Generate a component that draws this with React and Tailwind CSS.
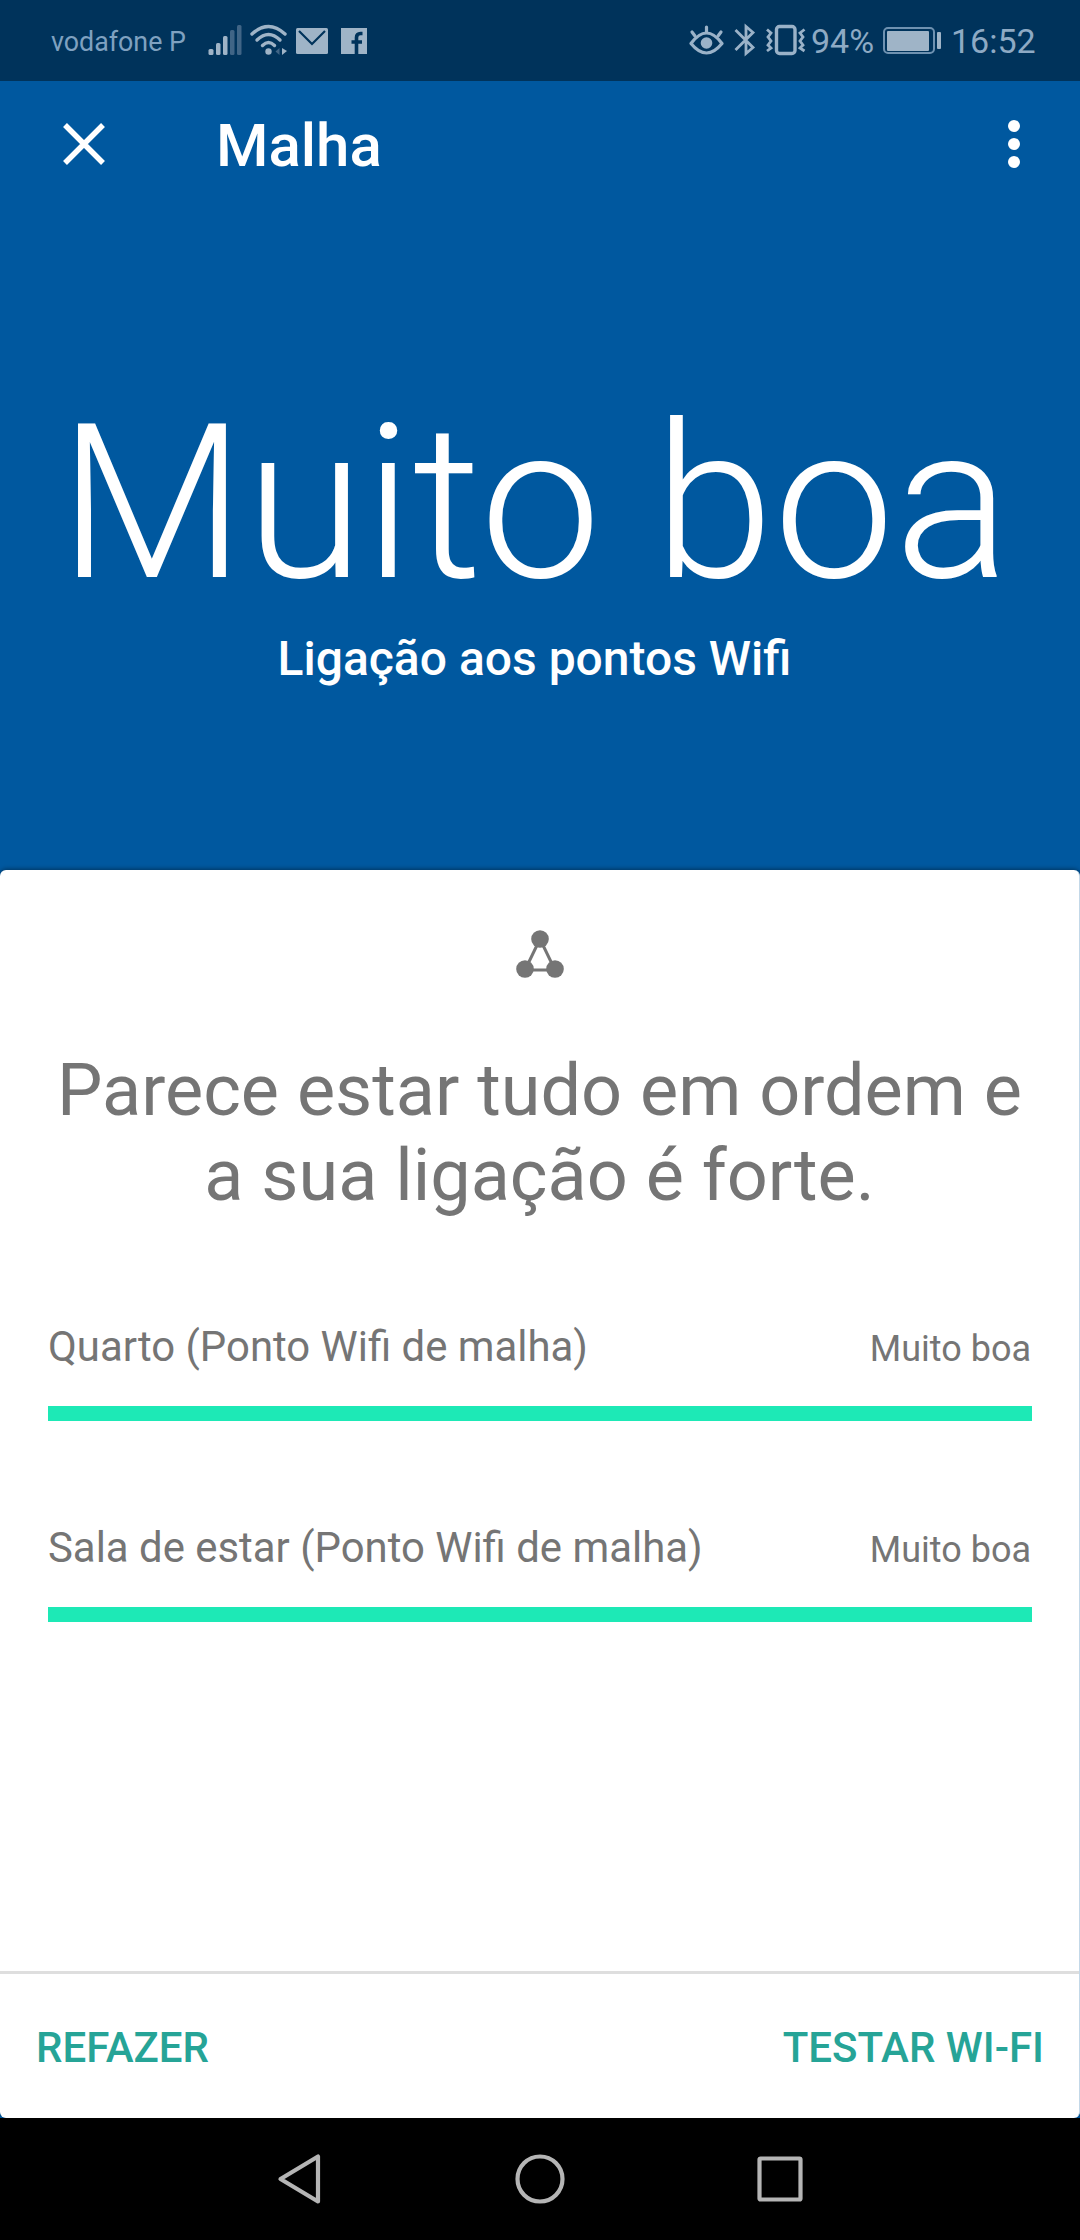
import React from 'react';

const rows = [
    { id: 1, name: 'Quarto (Ponto Wifi de malha)', status: 'Muito boa', strength: 100 },
    { id: 2, name: 'Sala de estar (Ponto Wifi de malha)', status: 'Muito boa', strength: 100 },
];

const StatusBar = () => (
    <div className="h-[81px] pb-[1px] bg-[#00335b] flex items-center pl-[51px] pr-[41px] text-[#8eaac4]">
        <span className="w-[157px] pt-[3px] text-[26.8px] leading-[32px] text-[#7fa1c0] whitespace-nowrap">vodafone P</span>
        {/* signal */}
        <svg className="w-[34px] h-[80px]" viewBox="208 0 34 80" fill="#9fb4c7">
            <rect x="208.5" y="49" width="5" height="6" rx="1.5" />
            <rect x="216" y="43" width="4.5" height="12" rx="1.5" />
            <rect x="223" y="36" width="4.5" height="19" rx="1.5" />
            <rect x="230" y="30" width="4.5" height="25" rx="1.5" fill="#406586" />
            <rect x="237" y="25" width="4.5" height="30" rx="1.5" fill="#406586" />
        </svg>
        {/* wifi */}
        <svg className="ml-[8px] w-[38px] h-[80px]" viewBox="250 0 38 80" fill="none" stroke="#9fb4c7" strokeWidth="3.4" strokeLinecap="round">
            <path d="M252 34Q268.500 19 285 34" />
            <path d="M257 40Q268.500 29 280 40" />
            <path d="M262.500 45.500Q268.500 39.500 274.500 45.500" />
            <circle cx="268.500" cy="51.500" r="3.200" fill="#9fb4c7" stroke="none" />
            <path d="M279.500 48v7l-4-3.500z" fill="#406586" stroke="none" />
            <path d="M282 48v7l5-4z" fill="#9fb4c7" stroke="none" />
        </svg>
        {/* mail */}
        <svg className="ml-[8px] w-[32px] h-[26px] mt-[2px]" viewBox="0 0 32 26" fill="none">
            <rect width="32" height="26" rx="1.500" fill="#9fb4c7" />
            <path d="M3 3L16 16L29 3" stroke="#00335b" strokeWidth="2.200" />
        </svg>
        {/* facebook */}
        <svg className="ml-[13px] w-[26px] h-[26px] mt-[2px]" viewBox="0 0 26 26" fill="none">
            <rect width="26" height="26" fill="#9fb4c7" />
            <path d="M15.500 26V9.500q0-4 4-4h2M10.500 14h10.500" stroke="#00335b" strokeWidth="3.600" />
        </svg>
        {/* eye */}
        <svg className="ml-auto w-[36px] h-[80px]" viewBox="688 0 36 80" fill="none" stroke="#9ab2c8" strokeWidth="3.200" strokeLinecap="round">
            <path d="M691 43.500Q706.500 22.500 722 43.500Q706.500 62.500 691 43.500z" strokeLinejoin="round" />
            <circle cx="706.500" cy="43" r="5.800" fill="#9ab2c8" stroke="none" />
            <path d="M706.500 27v5M692 32l3 4M721 32l-3 4" />
        </svg>
        {/* bluetooth */}
        <svg className="ml-[10px] w-[22px] h-[80px]" viewBox="734 0 22 80" fill="none" stroke="#9ab2c8" strokeWidth="2.800">
            <path d="M735.500 30L753 47.500L746 53.500V26.500L753 32.500L735.500 50" />
        </svg>
        {/* vibrate */}
        <svg className="ml-[8px] w-[44px] h-[80px]" viewBox="764 0 44 80" fill="none" stroke="#9ab2c8" strokeWidth="2.800">
            <rect x="776.500" y="26.500" width="18.500" height="27" rx="3" strokeWidth="3.400" />
            <path d="M767 29.500l4 3.500l-3 4l3 4l-3 4l3 3l-4 3M804.500 29.500l-4.500 3.500l3 4l-3 4l3 4l-3 3l4.500 3" />
        </svg>
        <span className="w-[74px] pl-[3px] pt-[2px] text-[34px] leading-[40px]">94%</span>
        {/* battery */}
        <svg className="w-[60px] h-[80px]" viewBox="882 0 60 80" fill="none">
            <rect x="884" y="28" width="50" height="25" rx="4" strokeWidth="2" stroke="#6f92b1" />
            <rect x="887" y="31" width="42" height="20" rx="1" fill="#9fb4c7" />
            <rect x="937" y="32" width="4" height="17" rx="1" fill="#9fb4c7" />
        </svg>
        <span className="w-[97px] pl-[9px] pt-[2px] text-[34px] leading-[40px] whitespace-nowrap">16:52</span>
    </div>
);

const AppBar = () => (
    <div className="h-[127px] pb-[1px] flex items-center pl-[63px] pr-[60px]">
        <svg className="w-[42px] h-[42px]" viewBox="0 0 42 42" stroke="#fff" strokeWidth="5.500">
            <path d="M2 2L40 40M40 2L2 40" />
        </svg>
        <h1 className="ml-[111px] pt-[4px] text-[60px] leading-[72px] font-medium">Malha</h1>
        <svg className="ml-auto w-[12px] h-[48px]" viewBox="0 0 12 48" fill="#fff">
            <circle cx="6" cy="6" r="6" />
            <circle cx="6" cy="24" r="6" />
            <circle cx="6" cy="42" r="6" />
        </svg>
    </div>
);

const MeshRow = ({ row }) => (
    <div className="h-[201px]">
        <div className="flex justify-between items-baseline">
            <span className="text-[41.9px] leading-[50px]">{row.name}</span>
            <span className="pr-[1px] text-[36px] leading-[42px]">{row.status}</span>
        </div>
        <div className="mt-[34px] h-[15px]">
            <div className="h-full bg-[#1de9b6]" style={{ width: `${row.strength}%` }}></div>
        </div>
    </div>
);

const NavBar = () => (
    <div className="h-[122px] bg-black flex items-center justify-center gap-[190px]">
        <svg className="w-[50px] h-[54px]" viewBox="0 0 50 54" fill="none" stroke="#b5b5b5" strokeWidth="4.200" strokeLinejoin="round">
            <path d="M43 4.500V49.500L5.500 27z" />
        </svg>
        <svg className="w-[50px] h-[54px]" viewBox="0 0 50 54" fill="none" stroke="#b5b5b5" strokeWidth="4.200">
            <circle cx="25" cy="27" r="22.500" />
        </svg>
        <svg className="w-[50px] h-[54px]" viewBox="0 0 50 54" fill="none" stroke="#b5b5b5" strokeWidth="4.200" strokeLinejoin="round">
            <rect x="4.500" y="6.500" width="41" height="41" rx="1" />
        </svg>
    </div>
);

const App = () => {
    return (
        <div className="w-[1080px] h-[2240px] flex flex-col overflow-hidden bg-[#00589f] text-white font-['Roboto',sans-serif]">
            <StatusBar />
            <AppBar />
            <div className="h-[662px] pr-[11px] flex flex-col items-center">
                <div className="mt-[169px] text-[216px] leading-[254px] font-light whitespace-nowrap">Muito boa</div>
                <div className="text-[48px] leading-[56px] font-medium">Ligação aos pontos Wifi</div>
            </div>
            <div className="h-[1248px] flex flex-col bg-white rounded-[6px] border-r border-[#c3d8e8] text-[#757575] shadow-[0_-1px_4px_rgba(0,0,0,0.4)]">
                <svg className="mt-[60px] mx-auto w-[50px] h-[50px] shrink-0" viewBox="0 0 50 50" fill="#757575">
                    <path d="M25 9L10 40H40z" fill="none" stroke="#757575" strokeWidth="3" />
                    <circle cx="25" cy="9" r="8.800" />
                    <circle cx="10" cy="39" r="8.800" />
                    <circle cx="40" cy="39" r="8.800" />
                </svg>
                <p className="mt-[68px] px-[48px] text-center text-[72px] leading-[85px]">
                    Parece estar tudo em ordem e<br />a sua ligação é forte.
                </p>
                <div className="mt-[104px] pl-[48px] pr-[47px]">
                    {rows.map((row) => (
                        <MeshRow key={row.id} row={row} />
                    ))}
                </div>
                <div className="mt-auto h-[147px] pt-[2px] shrink-0 border-t-[3px] border-[#dedede] flex items-center justify-between pl-[36px] pr-[35px] text-[42px] font-medium text-[#26a497]">
                    <button>REFAZER</button>
                    <button>TESTAR WI-FI</button>
                </div>
            </div>
            <NavBar />
        </div>
    );
};

export default App;
